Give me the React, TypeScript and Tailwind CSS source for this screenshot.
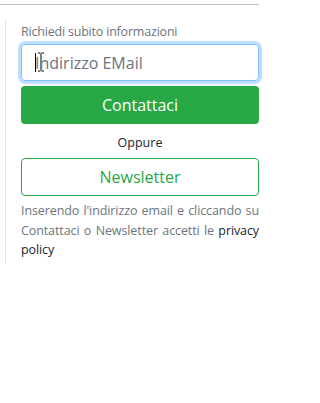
import React from 'react';

const font = { fontFamily: '"Open Sans", "Noto Sans", sans-serif' };

export default function App() {
  return (
    <div className="w-[267px] h-[403px] bg-white" style={font}>
      <div className="pt-[4px] w-[259px]">
        <div className="h-px bg-[#bdbdbd]" />
      </div>
      <div className="mt-[14px] ml-[5px] w-[254px] border-l border-[#e3e3e3] pl-[15px] pt-[3px] pb-[4px]">
        <div className="text-[12.5px] leading-[19px] text-[#6c757d] tracking-[-0.2px]">Richiedi subito informazioni</div>
        <div className="relative mt-[3px]">
          <input
            className="w-full h-[37px] rounded-[4px] border border-[#80bdff] px-[13px] text-[16px] text-[#495057] placeholder:text-[#6c757d] outline-none shadow-[0_0_0_3px_rgba(0,123,255,0.25)]"
            placeholder="Indirizzo EMail"
          />
          <span className="absolute left-[14px] top-[9px] w-px h-[19px] bg-black" />
          <svg className="absolute left-[16px] top-[8px]" width="8" height="20" viewBox="0 0 8 20">
            <path d="M1 1h2.5M4.5 1h2.5M4 1.5v17M1 19h2.5M4.5 19h2.5" stroke="#fff" strokeWidth="2.2" fill="none" />
            <path d="M1 1h2.5M4.5 1h2.5M4 1.5v17M1 19h2.5M4.5 19h2.5" stroke="#000" strokeWidth="1" fill="none" />
          </svg>
        </div>
        <button className="mt-[5px] w-full h-[38px] rounded-[4px] bg-[#28a745] text-white text-[16px] leading-[38px] text-center">
          Contattaci
        </button>
        <div className="mt-[9px] text-center text-[12.5px] leading-[19px] text-[#212529]">Oppure</div>
        <button className="mt-[6px] w-full h-[38px] rounded-[4px] border border-[#28a745] text-[#28a745] text-[16px] text-center">
          Newsletter
        </button>
        <p className="mt-[5px] text-[12.5px] leading-[19.5px] text-[#6c757d] text-justify tracking-[-0.1px]">
          Inserendo l'indirizzo email e cliccando su Contattaci o Newsletter accetti le{' '}
          <span className="text-[#212529]">privacy policy</span>
        </p>
      </div>
    </div>
  );
}
